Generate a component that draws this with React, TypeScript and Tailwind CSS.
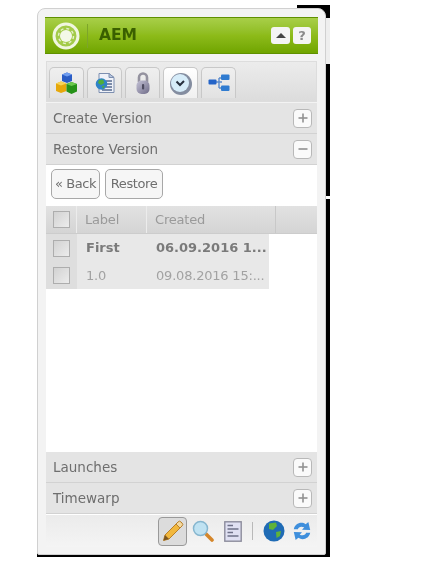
import React from 'react'

const font = "font-['DejaVu_Sans',sans-serif]"

const Section = ({ title, open }: { title: string; open?: boolean }) => (
    <div className="h-[31px] flex flex-row items-center justify-between pl-[7px] pr-[5px] bg-[#e4e4e4] border-b border-[#d2d2d2]">
        <span className="text-[13.5px] text-[#6e6e6e]">{title}</span>
        <div className="w-[19px] h-[19px] rounded-[4px] border border-[#b8b8b8] bg-[#fafafa] flex items-center justify-center">
            <svg width="10" height="10" viewBox="0 0 10 10">
                <rect x="0.5" y="4.2" width="9" height="1.6" fill="#929292" />
                {!open && <rect x="4.2" y="0.5" width="1.6" height="9" fill="#929292" />}
            </svg>
        </div>
    </div>
)

const Check = () => (
    <div className="w-[17px] h-[17px] border border-[#adadad] bg-gradient-to-br from-[#d2d2d2] to-[#ececec]"></div>
)

const Tab = ({ active, children }: { active?: boolean; children: React.ReactNode }) => (
    <div className={`w-[35px] h-[31px] flex items-center justify-center rounded-t-[5px] border border-b-0 border-[#c8c8c8] ${active ? 'bg-gradient-to-b from-[#ffffff] to-[#f0f0f0]' : 'bg-gradient-to-b from-[#efefef] to-[#e2e2e2]'}`}>
        {children}
    </div>
)

const AemLogo = () => (
    <svg width="28" height="28" viewBox="0 0 28 28" fill="none">
        <circle cx="14" cy="14" r="12" stroke="#f0f6e0" strokeWidth="3" fill="#a3cb49" />
        <circle cx="14" cy="14" r="6" fill="#f4f8e8" />
        <circle cx="14" cy="14" r="7.5" stroke="#e6f0cc" strokeWidth="1.4" strokeDasharray="3 2.9" />
    </svg>
)

const CubesIcon = () => (
    <svg width="23" height="23" viewBox="0 0 23 23">
        <path d="M7 2.5 L12 0.5 L17 2.5 L17 9 L12 11 L7 9 Z" fill="#2a5cc4" />
        <path d="M7 2.5 L12 0.5 L17 2.5 L12 4.5 Z" fill="#6f9df0" />
        <path d="M1 11.5 L6 9.5 L11.5 11.5 L11.5 19 L6 21 L1 19 Z" fill="#e6a80c" />
        <path d="M1 11.5 L6 9.5 L11.5 11.5 L6 13.5 Z" fill="#f6d55a" />
        <path d="M11.5 12 L16.5 10 L22 12 L22 19.5 L16.5 22 L11.5 19.5 Z" fill="#259218" />
        <path d="M11.5 12 L16.5 10 L22 12 L16.5 14 Z" fill="#6cc94e" />
    </svg>
)

const PageGlobeIcon = () => (
    <svg width="22" height="22" viewBox="0 0 22 22">
        <path d="M5 1.5 H15 L20 5.5 V20.5 H5 Z" fill="#eef1f8" stroke="#7d8fb0" />
        <path d="M15 1.5 V5.5 H20 Z" fill="#b9c8e0" stroke="#7d8fb0" />
        <path d="M12 9 H18 M13 12 H18 M12 15 H18 M8 18 H18" stroke="#56698f" strokeWidth="1.3" />
        <circle cx="7.5" cy="12" r="5.8" fill="#2f83c8" />
        <path d="M5 8 L9 7.5 L10.5 11 L7 13 L4 11 Z M8 14 L11 13.5 L9 17 Z" fill="#4fae3a" />
    </svg>
)

const LockIcon = () => (
    <svg width="20" height="24" viewBox="0 0 20 24">
        <defs>
            <linearGradient id="lk" x1="0" y1="0" x2="1" y2="1">
                <stop offset="0" stopColor="#c4c2d6" />
                <stop offset="1" stopColor="#6f6c88" />
            </linearGradient>
        </defs>
        <path d="M6 11 V6.5 a4 4 0 0 1 8 0 V11" fill="none" stroke="#94929f" strokeWidth="2.6" />
        <rect x="3.5" y="9.5" width="13" height="13.5" rx="5" fill="url(#lk)" />
        <rect x="9" y="13" width="2.2" height="5.5" rx="1" fill="#4d4b60" />
    </svg>
)

const ClockIcon = () => (
    <svg width="25" height="25" viewBox="0 0 25 25">
        <circle cx="13" cy="13" r="11" fill="#848da0" />
        <circle cx="12" cy="12" r="9" fill="#d6ecf9" />
        <path d="M8.5 10.5 L12 14 L16 10" fill="none" stroke="#262e3d" strokeWidth="2" />
    </svg>
)

const TreeIcon = () => (
    <svg width="22" height="20" viewBox="0 0 22 20">
        <path d="M8 9 H14 M11 5 V15 M11 5 H15 M11 15 H15" stroke="#5c8ccc" strokeWidth="1.4" fill="none" />
        <rect x="0.5" y="6.5" width="8" height="5" rx="1" fill="#2464c8" />
        <rect x="13" y="1.5" width="8.5" height="5.5" rx="1" fill="#2f7bd0" />
        <rect x="13" y="12.5" width="8.5" height="5.5" rx="1" fill="#2f7bd0" />
    </svg>
)

const PencilIcon = () => (
    <svg width="24" height="24" viewBox="0 0 24 24">
        <path d="M4 16 L16 4 L20 8 L8 20 L2.5 21.5 Z" fill="#f1b73d" stroke="#b9802a" strokeWidth="1" />
        <path d="M15 5 L17 3 a2 2 0 0 1 3 0 l1 1 a2 2 0 0 1 0 3 L19 9 Z" fill="#f3d9a0" stroke="#b9802a" strokeWidth="1" />
        <path d="M4 16 L8 20 L2.5 21.5 Z" fill="#7a5520" />
    </svg>
)

const SearchIcon = () => (
    <svg width="22" height="22" viewBox="0 0 22 22">
        <path d="M12 12 L20 20" stroke="#d5862a" strokeWidth="3.6" strokeLinecap="round" />
        <circle cx="8.5" cy="8.5" r="7" fill="#bfe2f2" stroke="#86b6cf" strokeWidth="1.5" />
    </svg>
)

const ListIcon = () => (
    <svg width="18" height="21" viewBox="0 0 18 21">
        <rect x="0.8" y="0.8" width="16.4" height="19.4" fill="#dfe0f2" stroke="#8c8c9c" strokeWidth="1.4" />
        <path d="M3.5 4.5 H9 M3.5 8 H14.5 M3.5 11.5 H9 M3.5 15 H14.5" stroke="#6e7088" strokeWidth="1.4" />
    </svg>
)

const GlobeIcon = () => (
    <svg width="22" height="22" viewBox="0 0 22 22">
        <circle cx="11" cy="11" r="10.5" fill="#1f6bb5" />
        <path d="M6 3.5 L13 2.5 L14 6 L10 10 L6 9 Z M13 12 L18 11 L17 16 L13.5 18 Z" fill="#5fb23a" />
    </svg>
)

const RefreshIcon = () => (
    <svg width="20" height="22" viewBox="0 0 22 24" fill="none">
        <path d="M2 10 C3 4 10 1 15 4.5 L18 2 L20 11 L11 10.5 L13.5 8 C10 6.5 7 7.5 6.5 10 Z" fill="#3f8fdc" />
        <path d="M20 14 C19 20 12 23 7 19.5 L4 22 L2 13 L11 13.5 L8.5 16 C12 17.5 15 16.5 15.5 14 Z" fill="#3f8fdc" />
    </svg>
)

export default function App() {
    return (
        <div className={`${font} w-[441px] h-[580px] bg-white pt-[8px] pl-[37px] overflow-hidden`}>
            <div className="relative w-[289px] h-[547px] blur-[0.4px]">
                {/* black window edge behind the dialog */}
                <div className="absolute left-[260px] top-[-3px] w-[33px] h-[16px] bg-black"></div>
                <div className="absolute left-[285px] top-[10px] w-[8px] h-[46px] bg-[#eeeeee]"></div>
                <div className="absolute left-[285px] top-[56px] w-[8px] h-[132px] bg-black"></div>
                <div className="absolute left-[285px] top-[191px] w-[8px] h-[358px] bg-black"></div>
                <div className="absolute left-0 bottom-[-2px] w-[293px] h-[6px] bg-black"></div>

                <div className="relative flex flex-col w-[289px] h-[547px] rounded-t-[8px] rounded-b-[2px] border border-[#d0d0d0] bg-[#f3f3f3] pt-[8px] px-[8px] pb-[7px]">
                    <div className="h-[37px] -mx-[1px] flex flex-row items-center bg-gradient-to-b from-[#a8cf48] via-[#8dbb19] to-[#70a500] border-y border-[#5f9000] pl-[7px] pr-[7px]">
                        <AemLogo />
                        <div className="w-px h-[24px] bg-[#7da52a] ml-[7px]"></div>
                        <span className="ml-[11px] text-[15.5px] font-semibold text-[#3a6000]">AEM</span>
                        <div className="ml-auto flex flex-row gap-x-[3px]">
                            <div className="w-[19px] h-[17px] rounded-[3px] bg-[#f4f4f4] flex items-center justify-center">
                                <div className="w-0 h-0 border-x-[5px] border-x-transparent border-b-[5px] border-b-[#444444]"></div>
                            </div>
                            <div className="w-[18px] h-[17px] rounded-[3px] bg-[#f4f4f4] flex items-center justify-center text-[13px] font-bold text-[#8a8a8a]">?</div>
                        </div>
                    </div>

                    <div className="mt-[7px] h-[41px] flex flex-row items-end gap-x-[3px] pl-[2px] pb-[3px] bg-gradient-to-b from-[#ececec] to-[#dcdcdc] border border-[#dddddd]">
                        <Tab><CubesIcon /></Tab>
                        <Tab><PageGlobeIcon /></Tab>
                        <Tab><LockIcon /></Tab>
                        <Tab active><ClockIcon /></Tab>
                        <Tab><TreeIcon /></Tab>
                    </div>

                    <div className="mt-[1px] flex flex-col flex-1 bg-white">
                        <Section title="Create Version" />
                        <Section title="Restore Version" open />
                        <div className="h-[38px] flex flex-row items-center gap-x-[5px] pl-[5px] text-[13px] tracking-[-0.4px] text-[#6e6e6e]">
                            <div className="h-[30px] w-[49px] flex items-center justify-center rounded-[5px] border border-[#a8a8a8] bg-[#f6f6f6] whitespace-nowrap">« Back</div>
                            <div className="h-[30px] w-[58px] flex items-center justify-center rounded-[5px] border border-[#a8a8a8] bg-[#f6f6f6]">Restore</div>
                        </div>
                        <div className="mt-[3px] h-[28px] flex flex-row items-stretch bg-gradient-to-b from-[#e2e2e2] to-[#d4d4d4] border-b border-[#cccccc] text-[13px] tracking-[-0.2px] text-[#9a9a9a]">
                            <div className="w-[31px] flex items-center justify-center border-r border-[#ececec]"><Check /></div>
                            <div className="w-[70px] flex items-center pl-[8px] border-r border-[#ececec]">Label</div>
                            <div className="w-[129px] flex items-center pl-[8px] border-r border-[#c8c8c8]">Created</div>
                        </div>
                        <div className="h-[28px] w-[223px] flex flex-row items-stretch bg-[#e8e8e8] text-[13px] font-bold text-[#7a7a7a]">
                            <div className="w-[31px] shrink-0 flex items-center justify-center bg-[#dedede]"><Check /></div>
                            <div className="w-[70px] shrink-0 flex items-center pl-[9px]">First</div>
                            <div className="flex items-center pl-[9px] whitespace-nowrap">06.09.2016 1...</div>
                        </div>
                        <div className="h-[27px] w-[223px] flex flex-row items-stretch bg-[#e8e8e8] text-[13px] tracking-[-0.2px] text-[#a2a2a2]">
                            <div className="w-[31px] shrink-0 flex items-center justify-center bg-[#dedede]"><Check /></div>
                            <div className="w-[70px] shrink-0 flex items-center pl-[9px]">1.0</div>
                            <div className="flex items-center pl-[9px] whitespace-nowrap">09.08.2016 15:...</div>
                        </div>
                        <div className="flex-1"></div>
                        <Section title="Launches" />
                        <Section title="Timewarp" />
                        <div className="h-[32px] mt-[1px] flex flex-row items-center justify-end bg-gradient-to-b from-[#ebebeb] to-[#f4f4f4] pr-[5px]">
                            <div className="w-[29px] h-[29px] mr-[5px] flex items-center justify-center rounded-[4px] border border-[#999999] bg-[#dcdcdc]"><PencilIcon /></div>
                            <SearchIcon />
                            <div className="ml-[10px]"><ListIcon /></div>
                            <div className="w-px h-[18px] bg-[#b9b9b9] mx-[10px]"></div>
                            <GlobeIcon />
                            <div className="ml-[7px]"><RefreshIcon /></div>
                        </div>
                    </div>
                </div>
            </div>
        </div>
    )
}
